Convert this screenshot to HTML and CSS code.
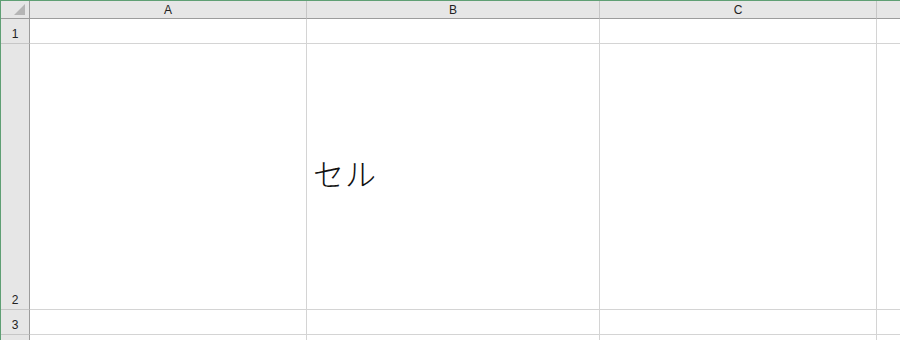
FILE: index.html
```html
<!DOCTYPE html>
<html lang="ja">
<head>
    <meta charset="UTF-8">
    <title>Sheet</title>
    <link rel="stylesheet" href="styles.css">
</head>
<body>
    <div class="sheet">
        <div class="corner"><span class="tri"></span></div>
        <div class="col-head">A</div>
        <div class="col-head">B</div>
        <div class="col-head">C</div>
        <div class="col-head last"></div>

        <div class="row-head">1</div>
        <div class="cell"></div>
        <div class="cell"></div>
        <div class="cell"></div>
        <div class="cell last"></div>

        <div class="row-head">2</div>
        <div class="cell"></div>
        <div class="cell big">セル</div>
        <div class="cell"></div>
        <div class="cell last"></div>

        <div class="row-head">3</div>
        <div class="cell"></div>
        <div class="cell"></div>
        <div class="cell"></div>
        <div class="cell last"></div>

        <div class="row-head"></div>
        <div class="cell"></div>
        <div class="cell"></div>
        <div class="cell"></div>
        <div class="cell last"></div>
    </div>
</body>
</html>
```

FILE: styles.css
```css
body {
    margin: 0;
    background-color: #fff;
    font-family: "Liberation Sans", "Noto Sans CJK JP", sans-serif;
    overflow: hidden;
}

.sheet {
    display: grid;
    grid-template-columns: 29px 277px 293px 277px 1fr;
    grid-template-rows: 18px 25px 266px 25px 30px;
    width: 899px;
    height: 339px;
    border-top: 1px solid #5f9f74;
    border-left: 1px solid #5f9f74;
    overflow: hidden;
}

.corner {
    position: relative;
    background-color: #e6e6e6;
    border-right: 1px solid #9c9c9c;
    border-bottom: 1px solid #9c9c9c;
}

.corner .tri {
    position: absolute;
    right: 4px;
    bottom: 3px;
    width: 0;
    height: 0;
    border-left: 11px solid transparent;
    border-bottom: 11px solid #b5b5b5;
}

.col-head {
    background-color: #e6e6e6;
    border-right: 1px solid #c6c6c6;
    border-bottom: 1px solid #9c9c9c;
    font-size: 12px;
    color: #222;
    text-align: center;
    line-height: 18px;
}

.col-head.last,
.cell.last {
    border-right: none;
}

.row-head {
    background-color: #e6e6e6;
    border-right: 1px solid #9c9c9c;
    border-bottom: 1px solid #c6c6c6;
    font-size: 12px;
    color: #222;
    display: flex;
    align-items: flex-end;
    justify-content: center;
    padding-bottom: 2px;
}

.cell {
    border-right: 1px solid #d4d4d4;
    border-bottom: 1px solid #d4d4d4;
}

.cell.big {
    display: flex;
    align-items: center;
    padding-left: 6px;
    padding-bottom: 8px;
    font-family: "Noto Sans CJK JP", sans-serif;
    font-size: 31px;
    font-weight: 300;
    letter-spacing: 1px;
    color: #111;
}
```
